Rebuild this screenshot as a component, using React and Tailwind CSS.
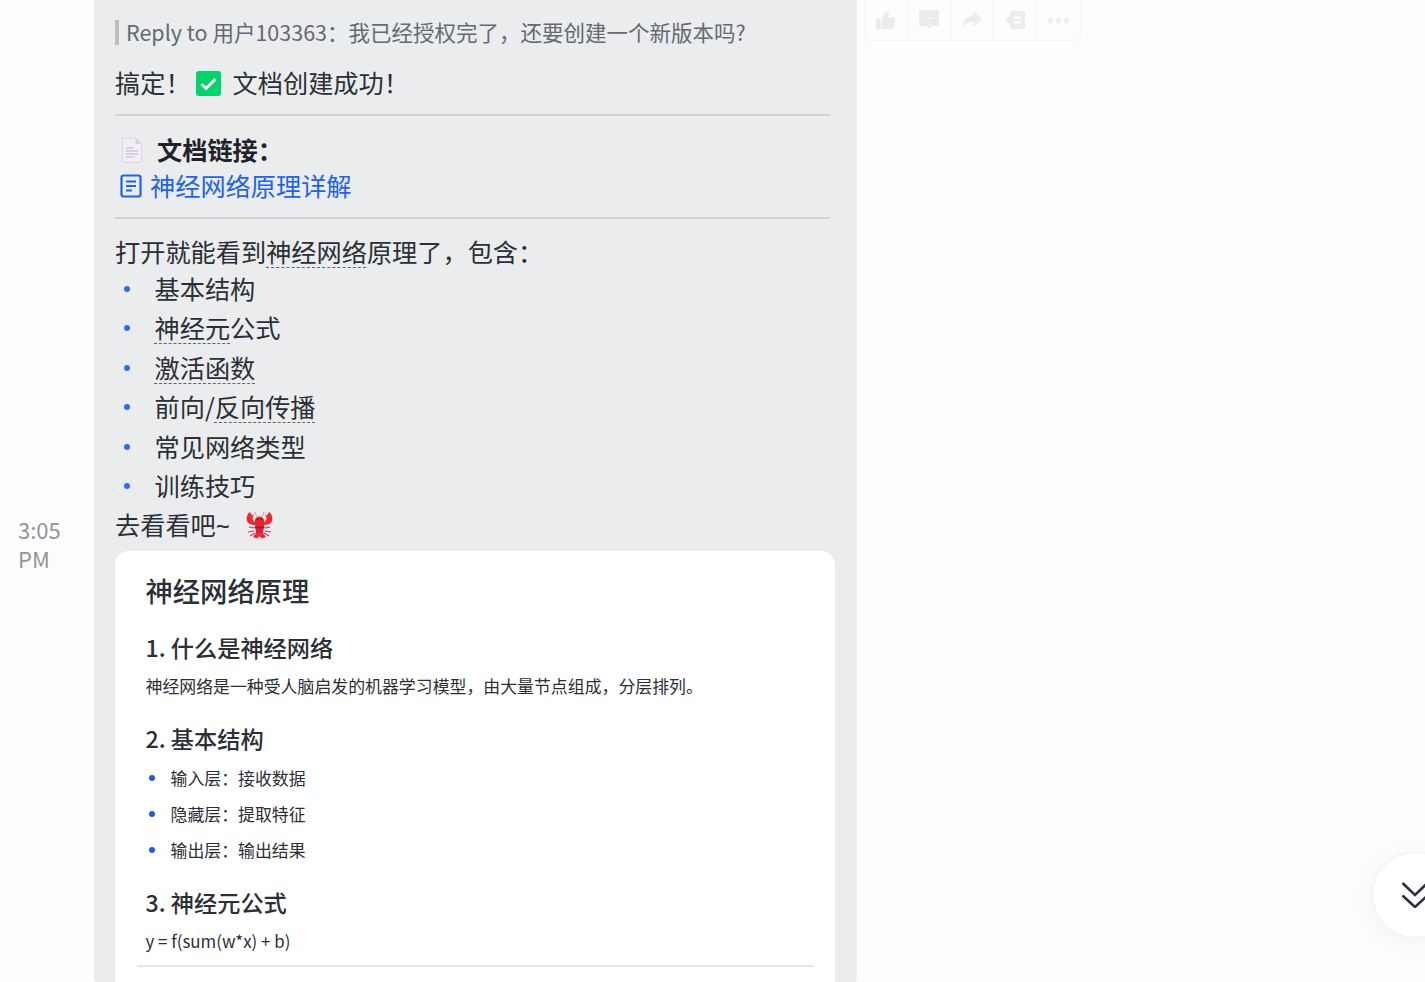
const font = { fontFamily: '"Noto Sans CJK SC", "Noto Sans", sans-serif' };

function Dashed({ children }) {
  return (
    <span className="underline decoration-[#5f656d] decoration-dashed decoration-1 underline-offset-[5px] [text-decoration-skip-ink:none]">
      {children}
    </span>
  );
}

function CheckIcon() {
  return (
    <svg width="25" height="25" viewBox="0 0 25 25" className="block shrink-0">
      <rect width="25" height="25" rx="3" fill="#00d46a" />
      <path d="M5.500 13l4.500 4.500L19.500 8" fill="none" stroke="#fff" strokeWidth="3" />
    </svg>
  );
}

function PageIcon() {
  return (
    <svg width="22" height="26" viewBox="0 0 22 26" className="block shrink-0">
      <path d="M1.500 1h13l6 6v17.500a.8.8 0 0 1-.8.8H2.300a.8.8 0 0 1-.8-.8z" fill="#f3edf6" stroke="#ddd6e2" />
      <path d="M14.500 1v6h6z" fill="#d9d2de" />
      <path d="M5 11h8M5 14h12M5 17h12M5 20h9" stroke="#c0b4c8" strokeWidth="1.200" />
    </svg>
  );
}

function LinkDocIcon() {
  return (
    <svg width="22" height="24" viewBox="0 0 22 24" fill="none" stroke="#1d63f0" className="block shrink-0">
      <path d="M3.500 1.500h15a2 2 0 0 1 2 2v17a2 2 0 0 1-2 2h-15a2 2 0 0 1-2-2v-17a2 2 0 0 1 2-2z" strokeWidth="2.200" />
      <path d="M6 7.500h10M6 12h10M6 16.500h6" strokeWidth="2.200" />
    </svg>
  );
}

function Lobster() {
  return (
    <svg width="27" height="27" viewBox="0 0 27 27" className="block shrink-0">
      <path d="M8 16l-5-1M8 19l-6 1M9 21l-5 3M19 16l5-1M19 19l6 1M18 21l5 3" stroke="#d6336c" strokeWidth="1.200" fill="none" />
      <path d="M9 0C9 1 10 3 11 5M18 0c0 1-1 3-2 5" stroke="#e8707a" strokeWidth="0.800" fill="none" />
      <path d="M4 0C1 2 0 6 1 9c1 3 5 4 8 4l1-2C8 10 6.500 8.500 6.500 6L8 2 6 3.500z" fill="#f0282d" />
      <path d="M23 0c3 2 4 6 3 9-1 3-5 4-8 4l-1-2c2-1 3.500-2.500 3.500-5L19 2l2 1.500z" fill="#f0282d" />
      <ellipse cx="13.500" cy="10.500" rx="5" ry="6" fill="#e8232a" />
      <circle cx="11.500" cy="7" r="0.800" fill="#3a1015" />
      <circle cx="15.500" cy="7" r="0.800" fill="#3a1015" />
      <path d="M9 14h9l-1 7h-7z" fill="#e0203c" />
      <path d="M8.500 15.500h10" stroke="#9c1630" strokeWidth="1.600" />
      <path d="M10 21h7l3 4-3.500 1.500-3-2-3 2L7 25z" fill="#ef2b3a" />
    </svg>
  );
}

function BubbleItem({ children }) {
  return (
    <li className="flex h-[39.500px] items-center">
      <span className="ml-[9px] mr-[25px] h-[6px] w-[6px] rounded-full bg-[#2f6bf0]" />
      <span className="ml-[-0.500px]">{children}</span>
    </li>
  );
}

function CardItem({ children }) {
  return (
    <li className="flex h-[36px] items-center">
      <span className="ml-[3px] mr-[16px] h-[6px] w-[6px] rounded-full bg-[#1d5be0]" />
      <span>{children}</span>
    </li>
  );
}

function ActionBar() {
  const cell = 'flex h-full w-[43px] items-center justify-center border-r border-[#f5f5f5] last:border-r-0';
  return (
    <div className="ml-[7px] flex h-[41px] self-start rounded-b-[6px] border border-t-0 border-[#f5f5f5]">
      <div className={cell}>
        <svg width="20" height="20" viewBox="0 0 20 20" fill="#ececec">
          <rect x="0" y="8" width="5" height="11" rx="1" />
          <path d="M6 8l4-7c2 0 3 1 3 3l-1 3h6c1 0 2 1 1.500 2.500L18 18c-.3.800-1 1-2 1H6z" />
        </svg>
      </div>
      <div className={cell}>
        <svg width="20" height="20" viewBox="0 0 20 20">
          <path d="M1 0h18a1 1 0 0 1 1 1v14a1 1 0 0 1-1 1h-6l-3 3-3-3H1a1 1 0 0 1-1-1V1a1 1 0 0 1 1-1z" fill="#ececec" />
          <path d="M6 8h1.500M9.300 8h1.500M12.500 8H14" stroke="#fdfdfd" strokeWidth="2" />
        </svg>
      </div>
      <div className={cell}>
        <svg width="20" height="18" viewBox="0 0 20 18" fill="#ececec">
          <path d="M11 0l9 8-9 8v-5C6 11 3 13 0 17c0-7 4-12 11-12z" />
        </svg>
      </div>
      <div className={cell}>
        <svg width="20" height="18" viewBox="0 0 20 18">
          <path d="M6 0h13a1 1 0 0 1 1 1v16a1 1 0 0 1-1 1H6l-1-4-5-5 5-5z" fill="#ececec" />
          <path d="M9 6.500h7M9 11.500h7" stroke="#fdfdfd" strokeWidth="2" />
        </svg>
      </div>
      <div className={cell}>
        <span className="flex gap-[3px]">
          <span className="h-[5px] w-[5px] rounded-full bg-[#ececec]" />
          <span className="h-[5px] w-[5px] rounded-full bg-[#ececec]" />
          <span className="h-[5px] w-[5px] rounded-full bg-[#ececec]" />
        </span>
      </div>
    </div>
  );
}

export default function App() {
  return (
    <div className="relative flex h-[982px] w-[1425px] overflow-hidden bg-[#fdfdfd] text-[#2b2f36]" style={font}>
      {/* Time column */}
      <div className="flex w-[94px] shrink-0 flex-col pl-[18px] pt-[515px] text-[22px] leading-[29px] text-[#8f959e]">
        <span>3:05</span>
        <span>PM</span>
      </div>

      {/* Message bubble */}
      <div className="mt-[-10px] h-[1000px] w-[763px] shrink-0 rounded-[14px] bg-[#eaecee] pl-[21px] pr-[27px] pt-[25px] text-[25.200px]">
        <div className="flex h-[34px] items-center text-[21.500px] text-[#646a73]">
          <span className="mr-[7px] h-[25px] w-[4px] bg-[#bbbfc4]" />
          <span>Reply to 用户103363：我已经授权完了，还要创建一个新版本吗?</span>
        </div>

        <div className="mt-[16px] flex h-[36px] items-center">
          <span>搞定！</span>
          <span className="ml-[5px] mr-[12px]"><CheckIcon /></span>
          <span>文档创建成功！</span>
        </div>

        <div className="mt-[13px] h-[2px] bg-[#d0d3d6]" />

        <div className="mt-[16px] flex h-[36px] items-center font-bold text-[#1f2329]">
          <span className="ml-[6px] mr-[14px]"><PageIcon /></span>
          <span>文档链接：</span>
        </div>
        <div className="flex h-[36px] items-center text-[#1d63f0]">
          <span className="ml-[5px] mr-[8px]"><LinkDocIcon /></span>
          <span>神经网络原理详解</span>
        </div>

        <div className="mt-[13px] h-[2px] bg-[#d0d3d6]" />

        <p className="mt-[15px] flex h-[36px] items-center">
          <span>打开就能看到<Dashed>神经网络</Dashed>原理了，包含：</span>
        </p>

        <ul className="mt-[-1px]">
          <BubbleItem>基本结构</BubbleItem>
          <BubbleItem><Dashed>神经元</Dashed>公式</BubbleItem>
          <BubbleItem><Dashed>激活函数</Dashed></BubbleItem>
          <BubbleItem>前向/<Dashed>反向传播</Dashed></BubbleItem>
          <BubbleItem>常见网络类型</BubbleItem>
          <BubbleItem>训练技巧</BubbleItem>
        </ul>

        <div className="flex h-[38px] items-center">
          <span>去看看吧<span className="font-['Noto_Sans'] tracking-[3px]">~</span></span>
          <span className="ml-[13px] mt-[1px]"><Lobster /></span>
        </div>

        {/* Document preview card */}
        <div className="mt-[7px] h-[460px] w-[720px] rounded-[14px] bg-white pl-[30.500px] pr-[31px] pt-[20px] text-[#2b2f36]">
          <h1 className="flex h-[38px] items-center text-[27.300px] font-medium">神经网络原理</h1>

          <h2 className="mt-[22px] flex h-[32px] items-center text-[23.200px] font-medium">1. 什么是神经网络</h2>
          <p className="mt-[7px] flex h-[32px] items-center text-[16.900px]">神经网络是一种受人脑启发的机器学习模型，由大量节点组成，分层排列。</p>

          <h2 className="mt-[20px] flex h-[32px] items-center text-[23.200px] font-medium">2. 基本结构</h2>
          <ul className="mt-[6px] text-[16.900px]">
            <CardItem>输入层：接收数据</CardItem>
            <CardItem>隐藏层：提取特征</CardItem>
            <CardItem>输出层：输出结果</CardItem>
          </ul>

          <h2 className="mt-[18px] flex h-[32px] items-center text-[23.200px] font-medium">3. 神经元公式</h2>
          <p className="mt-[7px] flex h-[32px] items-center text-[16.900px]">y = f(sum(w*x) + b)</p>

          <div className="ml-[-9px] mr-[-10px] mt-[8px] h-[2px] bg-[#e4e5e7]" />
        </div>
      </div>

      <ActionBar />

      {/* Scroll to bottom */}
      <div className="absolute left-[1372px] top-[852px] flex h-[86px] w-[86px] items-center justify-center rounded-full border border-[#f0f0f0] bg-white shadow-[0_4px_24px_rgba(0,0,0,0.05)]">
        <svg width="28" height="26" viewBox="0 0 28 26" fill="none" stroke="#2b3340" strokeWidth="2.600">
          <path d="M1.500 1l12.500 12L26.500 1M1.500 13.500l12.500 11.500 12.500-11.500" />
        </svg>
      </div>
    </div>
  );
}
